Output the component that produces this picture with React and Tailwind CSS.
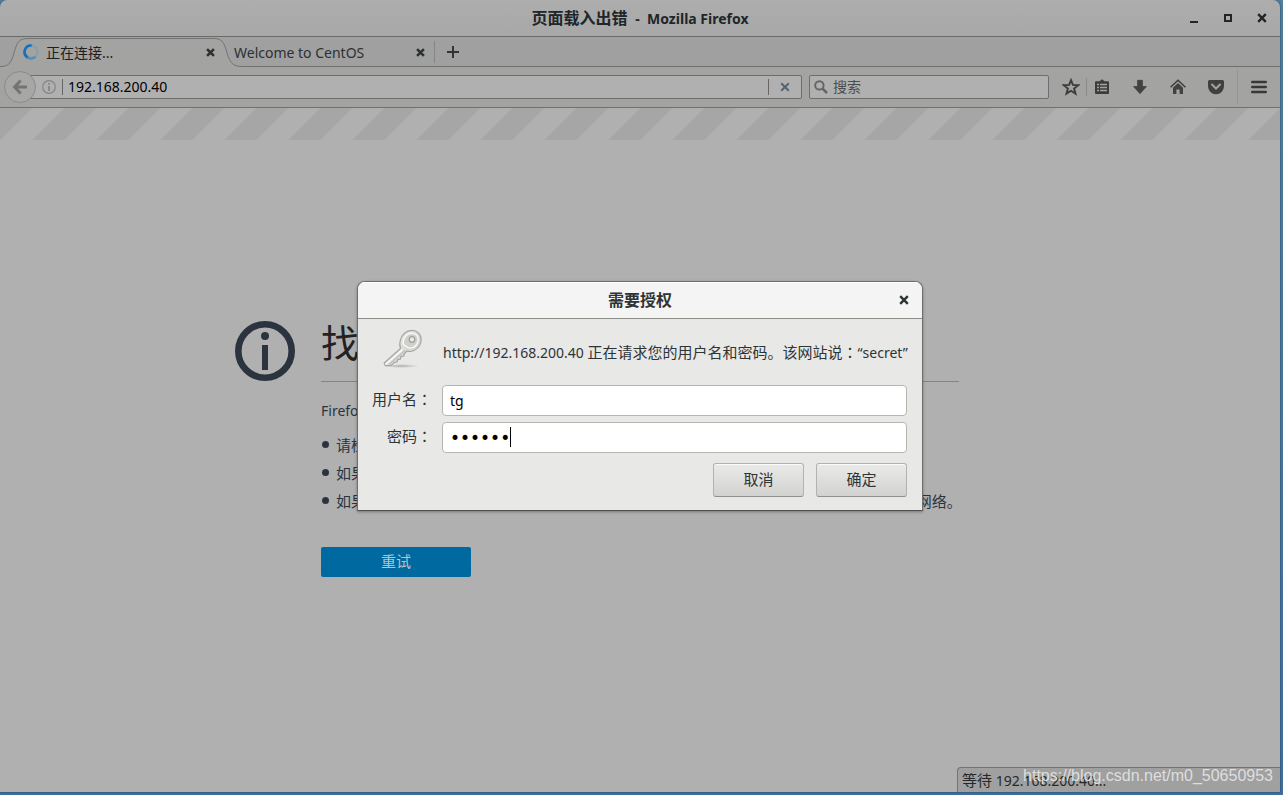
import React, { useState } from "react";

const FONT = "font-['Noto_Sans','Noto_Sans_CJK_SC',sans-serif]";

/* ── Small icons ── */
const CrossIcon = ({ size = 10, width = 2.4 }) => (
  <svg width={size} height={size} viewBox="0 0 10 10" fill="none" stroke="currentColor" strokeWidth={width}>
    <path d="M1.2 1.2 8.8 8.8M8.8 1.2 1.2 8.8" />
  </svg>
);

const SpinnerIcon = () => (
  <svg width="16" height="16" viewBox="0 0 16 16" fill="none" strokeWidth="2.6">
    <circle cx="8" cy="8" r="6.4" stroke="#8ba0ae" />
    <path d="M12.5 12.6A6.4 6.4 0 0 1 4 13" stroke="#5a8db5" />
    <path d="M4.6 13.4A6.4 6.4 0 0 1 8.6 1.6" stroke="#1470b8" />
  </svg>
);

const BackIcon = () => (
  <svg width="16" height="16" viewBox="0 0 16 16" fill="none" stroke="#747474" strokeWidth="3">
    <path d="M8.6 1.4 2.6 8l6 6.6M3 8h12" />
  </svg>
);

const InfoIcon = () => (
  <svg width="14" height="14" viewBox="0 0 14 14" fill="none" stroke="#858585">
    <circle cx="7" cy="7" r="6.3" strokeWidth="1.2" />
    <path d="M7 6v5M7 3v1.8" strokeWidth="1.8" />
  </svg>
);

const SearchIcon = () => (
  <svg width="14" height="14" viewBox="0 0 14 14" fill="none" stroke="#656565">
    <circle cx="5.4" cy="5.4" r="4.2" strokeWidth="2" />
    <path d="m8.6 8.6 4.4 4.4" strokeWidth="2.6" />
  </svg>
);

const StarIcon = () => (
  <svg width="18" height="18" viewBox="0 0 18 18" fill="none" stroke="#3c3c3c" strokeWidth="1.9">
    <path d="m9 2.2 1.9 4.7 5.3.3-4.1 3.3 1.4 5.1L9 12.8l-4.5 2.8 1.4-5.1L1.8 7.2l5.3-.3z" />
  </svg>
);

const ListIcon = () => (
  <svg width="16" height="16" viewBox="0 0 16 16" fill="#3c3c3c">
    <path d="M5.5 2.2 8 .2l2.5 2H14a1 1 0 0 1 1 1V14a1 1 0 0 1-1 1H2a1 1 0 0 1-1-1V3.2a1 1 0 0 1 1-1z" />
    <path d="M3 5.5h2M6 5.5h7M3 8.5h2M6 8.5h7M3 11.5h2M6 11.5h7" stroke="#a3a3a1" strokeWidth="1.4" />
  </svg>
);

const DownloadIcon = () => (
  <svg width="16" height="16" viewBox="0 0 16 16" fill="#424242" stroke="#383838" strokeWidth=".6">
    <path d="M5.5 1.3h5v6.2h4L8 14.7 1.5 7.5h4z" />
  </svg>
);

const HomeIcon = () => (
  <svg width="16" height="16" viewBox="0 0 16 16" fill="#424242">
    <path d="M.6 8.2 8 1.3l7.4 6.9" fill="none" stroke="#3c3c3c" strokeWidth="1.5" />
    <path d="M3 8.7 8 4l5 4.7V15H9.6v-4.5H6.4V15H3z" />
  </svg>
);

const PocketIcon = () => (
  <svg width="16" height="16" viewBox="1 0 16 16">
    <path d="M2.5 1h13A1.5 1.5 0 0 1 17 2.5v4.8a8 8 0 0 1-16 0V2.5A1.5 1.5 0 0 1 2.5 1z" fill="#404040" />
    <path d="m5 5.5 4 4 4-4" fill="none" stroke="#a3a3a1" strokeWidth="2" strokeLinecap="round" />
  </svg>
);

const MenuIcon = () => (
  <svg width="16" height="14" viewBox="0 0 16 14" stroke="#383838" strokeWidth="2.6" strokeLinecap="round">
    <path d="M1.3 2h13.4M1.3 7h13.4M1.3 12h13.4" />
  </svg>
);

const BigInfoIcon = () => (
  <svg width="60" height="60" viewBox="0 0 60 60">
    <circle cx="30" cy="30" r="26.7" fill="none" stroke="#2b343e" strokeWidth="6.6" />
    <circle cx="30" cy="15" r="4" fill="#2b343e" />
    <path d="M27 24h6v25h-6z" fill="#2b343e" />
  </svg>
);

const KeyIcon = () => (
  <svg width="44" height="40" viewBox="0 0 44 40">
    <defs>
      <linearGradient id="keyMetal" x1="0" y1="0" x2="1" y2="1">
        <stop offset="0" stopColor="#f4f4f3" />
        <stop offset="1" stopColor="#c4c5c1" />
      </linearGradient>
      <radialGradient id="keyShadow">
        <stop offset="0" stopColor="#8a8a88" stopOpacity=".6" />
        <stop offset="1" stopColor="#8a8a88" stopOpacity="0" />
      </radialGradient>
    </defs>
    <ellipse cx="20" cy="37" rx="18" ry="2" fill="url(#keyShadow)" />
    <path
      d="M19.5 19.5c-2-5 .2-12 4.2-15.5 4-3.5 10.3-3.6 13.8 0s3.500 9.500.5 13.500c-3 4-8 6-12 4.500l-2.500 2.500-.8 2.600-2.900.2-.4 2.800-2.600.2-.8 2.700-2.600.4-3.200 3-6 .2-1-2.600z"
      fill="url(#keyMetal)"
      stroke="#a5a6a2"
      strokeWidth="1.2"
      strokeLinejoin="round"
    />
    <path
      d="M22.5 15.5c-.8-4 .8-7.5 3.8-9.8 3.2-2.2 7.2-1.8 9.4.7s1.8 6.8-.4 9.600c-2 2.500-5.200 3.500-8.200 2.500z"
      fill="#cfd0cc"
      stroke="#fafafa"
      strokeWidth="1.3"
    />
    <path d="m21.5 20.5-17 15" stroke="#fbfbfb" strokeWidth="1.5" />
    <path d="m24 21.5-16 14" stroke="#b1b2ae" />
    <circle cx="31" cy="10.5" r="2.8" fill="#e8e8e6" stroke="#a0a19d" strokeWidth="1.3" />
  </svg>
);

/* ── Window chrome ── */
const TitleBar = () => (
  <header className="relative flex h-[37px] items-center justify-end border-b border-[#6b6b68] bg-linear-to-b from-[#adadad] to-[#a8a8a8] pr-[13px] text-[#202628]">
    <h1 className="absolute inset-x-0 text-center text-[16px] leading-6 font-bold whitespace-pre">
      页面载入出错 <span className="text-[14px]"> -  Mozilla Firefox</span>
    </h1>
    <div className="relative flex items-center gap-[25px]">
      <button aria-label="最小化" className="flex size-[9px] items-end">
        <span className="h-[2px] w-2 bg-current" />
      </button>
      <button aria-label="最大化" className="size-2 border-2 border-current" />
      <button aria-label="关闭" className="size-[10px]">
        <CrossIcon />
      </button>
    </div>
  </header>
);

const TabStrip = () => (
  <div role="tablist" className="relative flex h-[30px] items-center border-b border-[#707070] bg-[#a0a0a0] pt-px text-[14px] text-[#2b3032]">
    <svg className="absolute top-0 left-0" width="244" height="30" viewBox="0 0 244 30">
      <path
        d="M0 29.5C9 29.5 11 26 14 16 17 5 19 1.5 28 1.5H213C222 1.5 224 5 227 16 230 26 233 29.5 242 29.5V31H0z"
        fill="#a3a3a1"
        stroke="#74747a"
      />
    </svg>
    <div role="tab" aria-selected="true" className="relative flex w-[227px] items-center pl-[23px]">
      <SpinnerIcon />
      <span className="ml-[7px] flex-1 text-[#1c2022]">正在连接...</span>
      <button aria-label="关闭标签页" className="mr-3">
        <CrossIcon size={9} width={2.8} />
      </button>
    </div>
    <div role="tab" aria-selected="false" className="flex w-[207px] items-center pl-[7px]">
      <span className="flex-1">Welcome to CentOS</span>
      <button aria-label="关闭标签页" className="mr-[9px]">
        <CrossIcon size={9} width={2.8} />
      </button>
    </div>
    <div className="h-[22px] w-px bg-[#868686]" />
    <button aria-label="新建标签页" className="ml-3">
      <svg width="12" height="12" viewBox="0 0 12 12" stroke="#303436" strokeWidth="2">
        <path d="M6 0v12M0 6h12" />
      </svg>
    </button>
  </div>
);

const NavBar = () => {
  const [url, setUrl] = useState("192.168.200.40");

  return (
    <nav className="flex h-[41px] items-center border-b border-[#707070] bg-[#a3a3a1] pl-1">
      <button
        aria-label="后退"
        className="z-10 flex size-8 shrink-0 items-center justify-center rounded-full border border-[#8b8b8b] bg-[#a7a7a5]"
      >
        <BackIcon />
      </button>
      <div className="-ml-2 flex h-6 flex-1 items-center rounded-[2px] border border-[#6e6e6e] bg-[#b0b0b0] pl-[13px]">
        <InfoIcon />
        <div className="mr-[5px] ml-[6px] h-4 w-px bg-[#666]" />
        <input
          aria-label="网址"
          value={url}
          onChange={(e) => setUrl(e.target.value)}
          className="min-w-0 flex-1 pb-[2px] text-[14px] text-black outline-none"
        />
        <div className="h-4 w-px bg-[#666]" />
        <button aria-label="停止" className="mx-[11px] text-[#566270]">
          <CrossIcon width={2} />
        </button>
      </div>
      <div className="ml-[7px] flex h-6 w-[240px] items-center rounded-[2px] border border-[#6e6e6e] bg-[#b0b0b0] pl-1">
        <SearchIcon />
        <input
          aria-label="搜索"
          placeholder="搜索"
          className="ml-[5px] min-w-0 flex-1 pb-[2px] text-[14px] text-black outline-none placeholder:text-[#4d4d4d]"
        />
      </div>
      <button aria-label="收藏" className="ml-[13px]"><StarIcon /></button>
      <div className="mr-[7px] ml-[6px] h-[18px] w-px bg-[#8a8a8a]" />
      <div className="flex items-center gap-[22px]">
        <button aria-label="书签"><ListIcon /></button>
        <button aria-label="下载"><DownloadIcon /></button>
        <button aria-label="主页"><HomeIcon /></button>
        <button aria-label="Pocket"><PocketIcon /></button>
      </div>
      <div className="mx-[13px] h-[34px] w-px bg-[#949492]" />
      <button aria-label="菜单" className="mr-[13px]"><MenuIcon /></button>
    </nav>
  );
};

/* ── Error page ── */
const tips = [
  "请检查地址输入是否有误，例如 ww.example.com 误写成 www.example.com",
  "如果任何页面都无法加载，请检查您的网络连接。",
  "如果您的计算机或网络受到防火墙或者代理服务器的保护，请确认 Firefox 已被授权访问网络。",
];

const ErrorPage = () => (
  <main className="flex flex-1 flex-col bg-[#b0b0b0] text-[#2b343e]">
    <div className="h-8 bg-[linear-gradient(135deg,#a6a6a6_25%,#b0b0b0_25%_50%,#a6a6a6_50%_75%,#b0b0b0_75%)] bg-[length:64px_64px]" />
    <div className="flex flex-1 items-center justify-center pr-[86px] pb-10">
      <div className="flex w-[724px] items-start gap-[26px]">
        <div className="shrink-0 pt-[5px]">
          <BigInfoIcon />
        </div>
        <section className="min-w-0 flex-1 text-[14px]">
          <h2 className="border-b border-[#858585] pb-[13px] text-[38px] leading-[52px] text-[#222]">找不到服务器</h2>
          <p className="mt-[17px] leading-6">Firefox 找不到在 192.168.200.40 的服务器。</p>
          <ul className="mt-2 text-[15px] leading-7">
            {tips.map((tip) => (
              <li key={tip} className="flex items-center gap-[7px] whitespace-nowrap">
                <span className="ml-px size-[7px] shrink-0 rounded-full bg-current" />
                {tip}
              </li>
            ))}
          </ul>
          <button className="mt-8 h-[30px] w-[150px] rounded-[2px] bg-[#00699f] text-[15px] text-[#b8c2c8]">重试</button>
        </section>
      </div>
    </div>
  </main>
);

/* ── Login dialog ── */
const dialogButton =
  "rounded-[3px] border border-[#b2b2af] border-b-[#8f8f8c] bg-linear-to-b from-[#eaeae9] to-[#d2d2d0] h-[34px] pb-[2px] text-[15px] shadow-[inset_0_1px_0_#fafafa]";
const dialogInput =
  "h-[31px] w-full rounded-[4px] border border-[#b5b5b2] bg-white px-[7px] text-black outline-none";

// full-width colon centred in its box
const Colon = () => <span className="font-['Noto_Sans_CJK_TC',sans-serif]">：</span>;

const AuthDialog = () => {
  const [user, setUser] = useState("tg");
  const [password, setPassword] = useState("secret");

  return (
    <div className="absolute inset-0 z-20 flex items-center justify-center">
      <div
        role="dialog"
        aria-labelledby="auth-title"
        className="w-[566px] overflow-hidden rounded-t-[8px] border border-[#6f6f6f] border-b-[#4f4f4f] bg-[#e8e8e7] text-[#2e3436] shadow-[0_1px_3px_#00000055]"
      >
        <div className="grid h-[37px] grid-cols-[1fr_auto_1fr] items-center border-b border-[#8d8f86] bg-[#f4f4f4] shadow-[inset_0_1px_0_white]">
          <h2 id="auth-title" className="col-start-2 text-[16px] font-bold">需要授权</h2>
          <button aria-label="关闭" className="mr-[13px] justify-self-end">
            <CrossIcon />
          </button>
        </div>
        <form className="px-3 pb-[13px]" onSubmit={(e) => e.preventDefault()}>
          <div className="flex h-[66px] items-center">
            <div className="w-[73px] shrink-0 pb-[6px] pl-[11px]">
              <KeyIcon />
            </div>
            <p className="text-[15px] whitespace-nowrap">
              <span className="text-[14px]">http://192.168.200.40 </span>
              正在请求您的用户名和密码。该网站说<Colon />
              <span className="text-[14px]">“secret”</span>
            </p>
          </div>
          <div className="mr-[3px] grid grid-cols-[62px_1fr] items-center gap-x-[10px] gap-y-[6px] text-[15px]">
            <label htmlFor="user" className="flex justify-end pb-[2px] whitespace-nowrap">用户名<Colon /></label>
            <input
              id="user"
              value={user}
              onChange={(e) => setUser(e.target.value)}
              className={`${dialogInput} text-[14px]`}
            />
            <label htmlFor="password" className="flex justify-end pb-[2px] whitespace-nowrap">密码<Colon /></label>
            <div className="relative">
              <input
                id="password"
                type="password"
                value={password}
                onChange={(e) => setPassword(e.target.value)}
                className={`${dialogInput} block font-['DejaVu_Sans',sans-serif] text-[17px] caret-transparent`}
              />
              <span className="absolute top-[5px] left-[68px] h-5 w-px bg-black" />
            </div>
          </div>
          <div className="mt-[10px] mr-[3px] flex justify-end gap-3">
            <button type="button" className={`${dialogButton} w-[91px]`}>取消</button>
            <button type="submit" className={`${dialogButton} w-[91px]`}>确定</button>
          </div>
        </form>
      </div>
    </div>
  );
};

const StatusPanel = () => (
  <div className="absolute right-0 bottom-0 flex h-[25px] w-[323px] items-center rounded-tl-[4px] border-t border-l border-[#747474] bg-[#a0a0a0] pl-1 text-[14px] whitespace-pre text-[#24292b]">
    <span className="text-[15px]">等待</span> 192.168.200.40...
    <span className="absolute right-[7px] bottom-1 font-['Liberation_Sans',sans-serif] text-[16px] text-[#dedede]">
      https://blog.csdn.net/m0_50650953
    </span>
  </div>
);

const App = () => (
  <div className={`h-screen bg-linear-to-b from-[#4f7f9c] to-[#3f6f9c] pr-[3px] pb-[3px] ${FONT}`}>
    <div className="relative flex h-full flex-col overflow-hidden rounded-t-[7px] shadow-[0_0_2px_#1c3c50]">
      <TitleBar />
      <TabStrip />
      <NavBar />
      <ErrorPage />
      <StatusPanel />
      <AuthDialog />
    </div>
  </div>
);

export default App;
